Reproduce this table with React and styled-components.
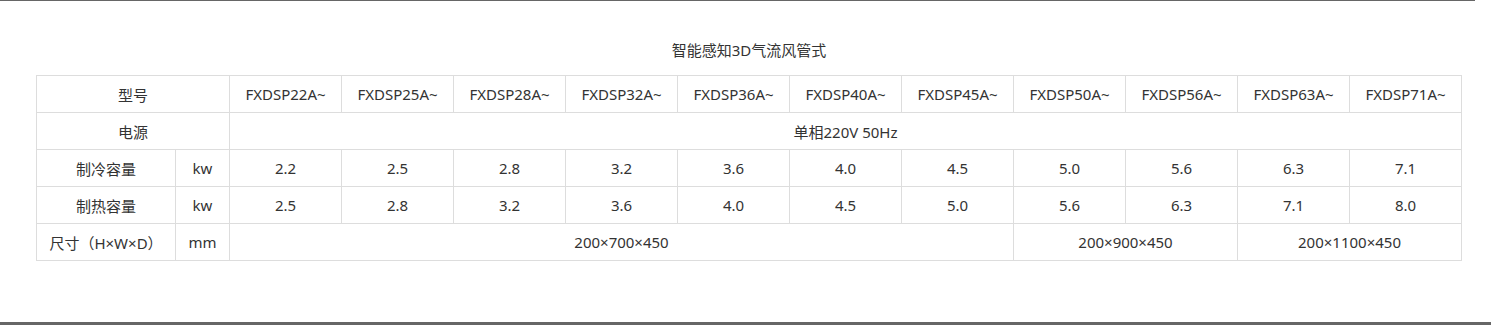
import styled, { createGlobalStyle } from 'styled-components';

const GlobalStyle = createGlobalStyle`
  html, body {
    margin: 0;
    padding: 0;
    background: #fff;
  }
  body {
    font-family: 'Noto Sans', 'Noto Sans CJK SC', sans-serif;
    color: #333;
  }
`;

const Frame = styled.div`
  position: relative;
  box-sizing: border-box;
  height: 325px;
  padding-top: 38px;
  border-bottom: 3px solid #666;

  &::before {
    content: '';
    position: absolute;
    top: 0;
    left: 0;
    width: 1475px;
    height: 1px;
    background: #666;
  }
`;

const Title = styled.h3`
  margin: 0 0 13px;
  width: 1426px;
  margin-left: 36px;
  font-size: 15px;
  font-weight: normal;
  line-height: 24px;
  text-align: center;
  color: #333;
`;

const Table = styled.table`
  margin-left: 36px;
  width: 1426px;
  table-layout: fixed;
  border-collapse: collapse;
  font-size: 15px;
`;

const Cell = styled.td`
  height: 36px;
  padding: 0;
  border: 1px solid #ddd;
  text-align: center;
  vertical-align: middle;
  white-space: nowrap;
  color: #333;
`;

const models = ['22', '25', '28', '32', '36', '40', '45', '50', '56', '63', '71'];
const cooling = ['2.2', '2.5', '2.8', '3.2', '3.6', '4.0', '4.5', '5.0', '5.6', '6.3', '7.1'];
const heating = ['2.5', '2.8', '3.2', '3.6', '4.0', '4.5', '5.0', '5.6', '6.3', '7.1', '8.0'];

export default function App() {
  return (
    <>
      <GlobalStyle />
      <Frame>
        <Title>智能感知3D气流风管式</Title>
        <Table>
          <colgroup>
            <col style={{ width: 139 }} />
            <col style={{ width: 54 }} />
            {models.map((m) => (
              <col key={m} style={{ width: 112 }} />
            ))}
          </colgroup>
          <tbody>
            <tr>
              <Cell colSpan={2}>型号</Cell>
              {models.map((m) => (
                <Cell key={m}>FXDSP{m}A~</Cell>
              ))}
            </tr>
            <tr>
              <Cell colSpan={2}>电源</Cell>
              <Cell colSpan={11}>单相220V 50Hz</Cell>
            </tr>
            <tr>
              <Cell>制冷容量</Cell>
              <Cell>kw</Cell>
              {cooling.map((v, i) => (
                <Cell key={i}>{v}</Cell>
              ))}
            </tr>
            <tr>
              <Cell>制热容量</Cell>
              <Cell>kw</Cell>
              {heating.map((v, i) => (
                <Cell key={i}>{v}</Cell>
              ))}
            </tr>
            <tr>
              <Cell>尺寸（H×W×D）</Cell>
              <Cell>mm</Cell>
              <Cell colSpan={7}>200×700×450</Cell>
              <Cell colSpan={2}>200×900×450</Cell>
              <Cell colSpan={2}>200×1100×450</Cell>
            </tr>
          </tbody>
        </Table>
      </Frame>
    </>
  );
}
